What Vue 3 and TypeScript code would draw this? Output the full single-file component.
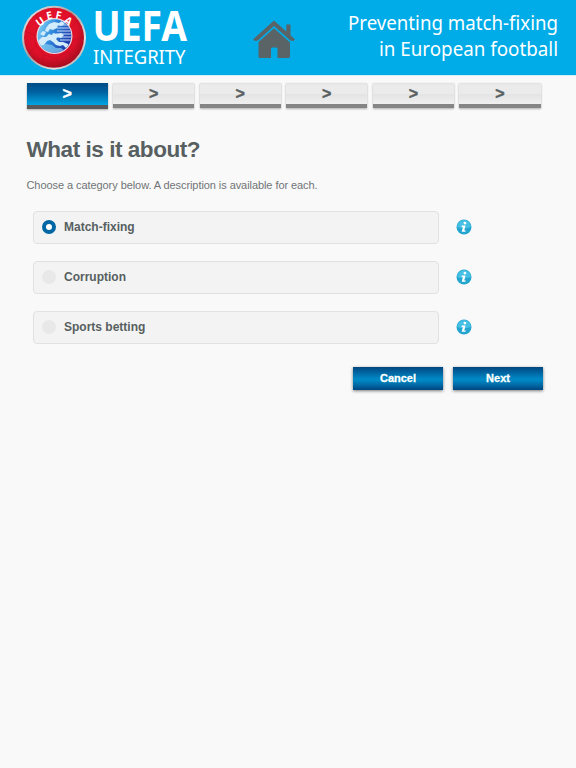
<script setup lang="ts">
import { ref } from 'vue'

interface Category {
  id: string
  label: string
}

const categories: Category[] = [
  { id: 'match-fixing', label: 'Match-fixing' },
  { id: 'corruption', label: 'Corruption' },
  { id: 'betting', label: 'Sports betting' },
]

const stepCount = 6
const currentStep = ref(1)
const selected = ref('match-fixing')
</script>

<template>
  <div class="page">
    <header class="header">
      <svg class="brand" width="180" height="75" viewBox="0 0 180 75">
        <defs>
          <linearGradient id="rim" x1="0" y1="0" x2="1" y2="1">
            <stop offset="0" stop-color="#f3eeee" />
            <stop offset=".45" stop-color="#a99b9d" />
            <stop offset=".75" stop-color="#e8e2e2" />
            <stop offset="1" stop-color="#8d7f83" />
          </linearGradient>
          <radialGradient id="red" cx=".45" cy=".4" r=".6">
            <stop offset="0" stop-color="#f0142c" />
            <stop offset=".72" stop-color="#dd1029" />
            <stop offset="1" stop-color="#a90d20" />
          </radialGradient>
          <linearGradient id="globe" x1="0" y1=".2" x2="1" y2=".6">
            <stop offset="0" stop-color="#7fd4f5" />
            <stop offset=".45" stop-color="#2f86dc" />
            <stop offset="1" stop-color="#1f33a8" />
          </linearGradient>
          <clipPath id="globe-clip"><circle cx="34.5" cy="36" r="16.6" /></clipPath>
        </defs>
        <circle cx="34" cy="37.7" r="32" fill="url(#rim)" />
        <circle cx="34" cy="37.7" r="30" fill="url(#red)" />
        <g fill="none" stroke="#b80d22" stroke-width=".8" opacity=".6">
          <path d="M5 31l9 4 2 11-7 7M16 46l8 9-3 10M24 55l12 3 5 9M36 58l12-6 8 5M48 52l5-12 10-3M53 40l-3-12 8-8M14 35l6-12-4-9" />
        </g>
        <circle cx="34.5" cy="36" r="18" fill="#e8d9df" />
        <circle cx="34.5" cy="36" r="16.8" fill="url(#globe)" />
        <g clip-path="url(#globe-clip)">
          <path
            d="M36 25h16M37 28h15M37 31h15M36 34h16M38 37h14M40 40h12"
            stroke="#c3dcf8"
            stroke-width="1"
          />
          <path
            d="M26 28l3-4 5-2 5 1 3-2 3 3-4 2-3-1-1 3-4 2-3-1-2 3-3-1zM20 34l3-3 3 1-2 4zM18 41l4-4 4 0 3-3 3 1 1-2 4 1 4-1 3 2-3 3-3-1-2 2 3 3 4 0 5 2 2 3-4 1-3-3-3 1-4-1-3-3-3-2-3 1-3 4-4 1z"
            fill="#d2ecfb"
          />
          <path d="M20 46l6-2 6 1 4 3 5 0 4 3-10 3-9-2z" fill="#86cdf0" opacity=".7" />
        </g>
        <g class="crest" fill="#fff" text-anchor="middle">
          <text transform="translate(22.300 24.600) rotate(-35)">U</text>
          <text transform="translate(30.200 19.200) rotate(-13)">E</text>
          <text transform="translate(37.900 18.900) rotate(12)">F</text>
          <text transform="translate(46.300 23.900) rotate(36)">A</text>
        </g>
        <text class="brand-name" x="72.5" y="41" textLength="94.500" lengthAdjust="spacingAndGlyphs">UEFA</text>
        <text class="brand-sub" x="73" y="64.300" textLength="92.5" lengthAdjust="spacingAndGlyphs">INTEGRITY</text>
      </svg>

      <svg class="home" width="44" height="40" viewBox="0 0 44 40" fill="#5a6467">
        <path d="M1 21.5L22 2.5l12.3 11V6.5h4.2v10.8l4.5 4.2-1.4 1.2h-3L22 8 5.500 22.700h-3z" />
        <path d="M22 10.200L38 24.500V38.500q0 1.500-1.500 1.500H25.500V31q0-1.500-1.500-1.500h-3.500q-1.500 0-1.500 1.500v9H8q-1.500 0-1.500-1.500V24z" />
      </svg>

      <svg class="tagline" width="228" height="75" viewBox="0 0 228 75">
        <text x="3" y="29.700" textLength="210" lengthAdjust="spacingAndGlyphs">Preventing match-fixing</text>
        <text x="34" y="56" textLength="179" lengthAdjust="spacingAndGlyphs">in European football</text>
      </svg>
    </header>

    <nav class="steps">
      <span
        v-for="step in stepCount"
        :key="step"
        class="step"
        :class="{ active: step === currentStep }"
      >&gt;</span>
    </nav>

    <main class="content">
      <h1>What is it about?</h1>
      <p class="intro">Choose a category below. A description is available for each.</p>

      <div v-for="category in categories" :key="category.id" class="row">
        <label class="option">
          <input v-model="selected" type="radio" name="category" :value="category.id">
          <span>{{ category.label }}</span>
        </label>
        <svg class="info" width="16" height="16" viewBox="0 0 16 16">
          <circle cx="8" cy="8" r="7.500" fill="#24a5d0" />
          <path d="M1 8a7 7 0 0 1 14 0q-7 2.500-14 0z" fill="#45bfe3" />
          <circle cx="8.900" cy="4.100" r="1.400" fill="#fff" />
          <path d="M5.800 6.500h3.700L8.300 11.400h1.500l-.4 1.400H5.700l1.200-4.900H5.500z" fill="#fff" />
        </svg>
      </div>

      <div class="actions">
        <button type="button">Cancel</button>
        <button type="button">Next</button>
      </div>
    </main>
  </div>
</template>

<style>
body {
  background: #f9f9f9;
}
</style>

<style scoped>
.page {
  min-height: 768px;
  background: #f9f9f9;
  color: #575f61;
  font-family: "Liberation Sans", Arial, sans-serif;
}

.header {
  display: flex;
  height: 75px;
  padding-left: 20px;
  background: #00ace8;
  border-bottom: 1px solid #d5eff9;
}

.brand,
.home,
.tagline {
  flex: none;
  display: block;
  overflow: visible;
}

.crest {
  font: bold 10.5px "Open Sans", sans-serif;
}

.brand-name {
  fill: #fff;
  font: bold 42px "Noto Sans", sans-serif;
}

.brand-sub {
  fill: #fff;
  font: 19.5px "Noto Sans", sans-serif;
}

.home {
  margin: 18px 0 0 52px;
}

.tagline {
  margin-left: 49px;
  fill: #fff;
  font: 20px "Noto Sans", sans-serif;
}

.steps {
  display: flex;
  gap: 5.2px;
  width: 514px;
  padding: 7px 0 0 26.5px;
}

.step {
  flex: 1;
  box-sizing: border-box;
  height: 25px;
  border-bottom: 4px solid #858585;
  box-shadow: 0 1px 2px rgba(0, 0, 0, 0.3);
  background: linear-gradient(#e0e0e0 0, #ebebeb 2px, #ebebeb 50%, #e4e4e4 55%, #f0f0f0);
  font: bold 16px/21px "Liberation Sans", Arial, sans-serif;
  -webkit-text-stroke: 0.4px currentColor;
  text-align: center;
}

.step.active {
  height: 26px;
  border-color: #58595b;
  background: linear-gradient(#004c86, #00619f 40%, #00a5e3);
  color: #fff;
}

.content {
  padding: 0 32px 0 26px;
}

h1 {
  margin: 27px 0 0 0.5px;
  font-size: 22.5px;
  line-height: 28px;
  letter-spacing: -0.45px;
}

.intro {
  margin: 13px 0 18px 0.5px;
  font-size: 11px;
  line-height: 16px;
  letter-spacing: -0.07px;
  color: #707476;
}

.row {
  display: flex;
  align-items: center;
  margin: 0 0 17px 7px;
}

.option {
  display: flex;
  align-items: center;
  box-sizing: border-box;
  width: 406px;
  height: 33px;
  padding-left: 8px;
  border: 1px solid #e1e1e1;
  border-radius: 4px;
  background: #f3f3f3;
  font-size: 12px;
  font-weight: bold;
}

.option span {
  padding-bottom: 2px;
}

.option input {
  appearance: none;
  box-sizing: border-box;
  width: 14px;
  height: 14px;
  margin: 0 8px 1px 0;
  border-radius: 50%;
  background: #e8e8e8;
}

.option input:checked {
  border: 4px solid #0067a4;
  background: #fff;
}

.info {
  margin: 0 0 1px 17px;
}

.actions {
  display: flex;
  justify-content: flex-end;
  gap: 10px;
  padding: 6px 1px 0 0;
}

button {
  width: 90px;
  height: 23px;
  padding: 0 0 1px;
  border: 0;
  background: linear-gradient(#004680, #0086c3 50%, #0086c3 60%, #004680);
  box-shadow: 0 1px 3px rgba(0, 0, 0, 0.5);
  color: #fff;
  font: bold 11px "Liberation Sans", Arial, sans-serif;
  -webkit-text-stroke: 0.3px currentColor;
}
</style>
